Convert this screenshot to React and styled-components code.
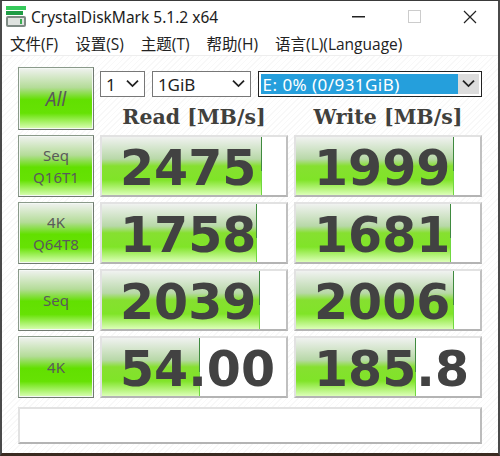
import React from 'react';
import styled, { createGlobalStyle } from 'styled-components';

const Global = createGlobalStyle`
html, body { margin: 0; padding: 0; background: #fff; }
* { box-sizing: border-box; }
`;

const Window = styled.div`
width: 500px;
height: 456px;
border-style: solid;
border-width: 1px 2px 3px 2px;
border-color: #3a3a3a #4a4a4a #3a2a20 #4a4a4a;
background: #fff;
display: flex;
flex-direction: column;
font-family: "Open Sans", "Noto Sans CJK SC", sans-serif;
color: #222;
overflow: hidden;
`;

const TitleBar = styled.div`
height: 31px;
display: flex;
align-items: center;
padding-left: 3px;
`;

const TitleText = styled.span`
margin-left: 4px;
flex: 1;
color: #1c1c1c;
font: 15.5px "Noto Sans", sans-serif;
`;

const WinButton = styled.div`
width: 56px;
height: 31px;
display: flex;
align-items: center;
justify-content: center;
`;

const MenuBar = styled.div`
height: 24px;
display: flex;
gap: 17px;
padding-left: 8px;
align-items: center;
font-size: 15.5px;
color: #222;
border-bottom: 1px solid #eee;
`;

const Client = styled.div`
flex: 1;
padding: 11px 14px 0 16px;
background: repeating-linear-gradient(135deg, #fff 0 3px, #f8f8f8 3px 4px);
display: grid;
grid-template-columns: 76px 188px 188px;
grid-template-rows: 63px repeat(4, 62px) 36px;
column-gap: 6px;
row-gap: 5px;
`;

const Panel = styled.div`
grid-column: 2 / 4;
display: flex;
flex-direction: column;
`;

const Selects = styled.div`
display: flex;
gap: 7px;
padding-top: 4px;
height: 30px;
`;

const Combo = styled.div`
width: ${p => p.$w}px;
height: 26px;
border: 1px solid ${p => (p.$active ? '#222' : '#777')};
background: #fff;
display: flex;
align-items: stretch;
font: 17px "Noto Sans", sans-serif;
padding: ${p => (p.$active ? '2px' : '0')};
color: ${p => (p.$active ? '#fff' : '#222')};
`;

const ComboValue = styled.div`
flex: 1;
display: flex;
align-items: center;
padding-left: ${p => (p.$active ? '2px' : '5px')};
letter-spacing: ${p => (p.$active ? '.45px' : '0')};
background: ${p => (p.$active ? '#259fdc' : 'transparent')};
`;

const ComboArrow = styled.div`
width: ${p => (p.$active ? '21px' : '23px')};
display: flex;
align-items: center;
justify-content: center;
background: ${p => (p.$active ? '#dcdcdc' : 'transparent')};
`;

const Headers = styled.div`
display: grid;
grid-template-columns: 188px 188px;
column-gap: 6px;
flex: 1;
`;

const Header = styled.div`
text-align: center;
font: bold 20.5px "DejaVu Serif", serif;
line-height: 40px;
color: #40403c;
`;

const TestButton = styled.div`
border: 1px solid #8a9a8a;
border-right-color: #707a70;
border-bottom-color: #707a70;
box-shadow: inset 0 0 0 1px #f4f8f4;
background: linear-gradient(#f0f2f0 0%, #b4dc98 32%, #62e000 52%, #66e204 74%, #dcffb8 100%);
display: flex;
flex-direction: column;
align-items: center;
justify-content: center;
color: #5a5a5a;
font-family: "Noto Sans", sans-serif;
font-size: ${p => (p.$big ? '19px' : '15px')};
font-style: ${p => (p.$big ? 'italic' : 'normal')};
line-height: 22px;
`;

const Meter = styled.div`
position: relative;
border: 2px solid #e2e2e2;
border-right-color: #c0c0c0;
border-bottom-color: #b4b4b4;
background: #fff;
`;

const Fill = styled.div`
position: absolute;
left: 0;
top: 0;
bottom: 0;
background: linear-gradient(#f0f2f0 0%, #b8d8a8 38%, #86e030 50%, #80e428 74%, #dcffb8 100%);
border-right: 1px solid #70d840;
&::after {
  content: '';
  position: absolute;
  right: -1px;
  top: 0;
  height: 58%;
  width: 1px;
  background: #3f8a3f;
}
`;

const Value = styled.div`
position: relative;
height: 100%;
padding-left: 18px;
font: bold 49px/63px "DejaVu Sans", sans-serif;
color: #424242;
`;

const Message = styled.div`
grid-column: 1 / 4;
margin-top: 4px;
height: 37px;
border: 2px solid #e2e2e2;
border-right-color: #bcbcbc;
border-bottom-color: #b4b4b4;
background: #fff;
`;

const Chevron = ({ size = 13 }) => (
  <svg width={size} height={size * 0.7} viewBox="0 0 13 9" fill="none" stroke="#222" strokeWidth="1.8">
    <path d="M1 1.5 L6.5 7 L12 1.5" />
  </svg>
);

const DiskIcon = () => (
  <svg width="22" height="22" viewBox="0 0 22 22">
    <rect x="1" y="0" width="20" height="4" fill="#35c95a" />
    <rect x="1" y="5" width="17" height="4" fill="#1f9c45" />
    <rect x="1" y="10" width="20" height="11" rx="2" fill="#7e8a84" />
    <rect x="3" y="12" width="16" height="7" fill="#dfe3e0" />
    <rect x="15" y="13" width="2" height="5" fill="#3cae54" />
  </svg>
);

const rows = [
  { label: ['Seq', 'Q16T1'], read: '2475', readPct: 87, write: '1999', writePct: 86 },
  { label: ['4K', 'Q64T8'], read: '1758', readPct: 84, write: '1681', writePct: 84 },
  { label: ['Seq'], read: '2039', readPct: 86, write: '2006', writePct: 86 },
  { label: ['4K'], read: '54.00', readPct: 53.5, write: '185.8', writePct: 65 },
];

const menus = ['文件(F)', '设置(S)', '主题(T)', '帮助(H)', '语言(L)(Language)'];

const Result = ({ value, pct }) => (
  <Meter>
    <Fill style={{ width: `${pct}%` }} />
    <Value>{value}</Value>
  </Meter>
);

export default function App() {
  return (
    <Window>
      <Global />
      <TitleBar>
        <DiskIcon />
        <TitleText>CrystalDiskMark 5.1.2 x64</TitleText>
        <WinButton>
          <svg width="13" height="2"><rect width="13" height="1.5" fill="#222" /></svg>
        </WinButton>
        <WinButton>
          <svg width="13" height="13"><rect x=".5" y=".5" width="12" height="12" fill="none" stroke="#ccc" /></svg>
        </WinButton>
        <WinButton>
          <svg width="14" height="14" stroke="#222" strokeWidth="1.2"><path d="M1 1 L13 13 M13 1 L1 13" /></svg>
        </WinButton>
      </TitleBar>
      <MenuBar>
        {menus.map(m => <span key={m}>{m}</span>)}
      </MenuBar>
      <Client>
        <TestButton $big>All</TestButton>
        <Panel>
          <Selects>
            <Combo $w={45}>
              <ComboValue>1</ComboValue>
              <ComboArrow><Chevron /></ComboArrow>
            </Combo>
            <Combo $w={99}>
              <ComboValue>1GiB</ComboValue>
              <ComboArrow><Chevron /></ComboArrow>
            </Combo>
            <Combo $w={225} $active>
              <ComboValue $active>E: 0% (0/931GiB)</ComboValue>
              <ComboArrow $active><Chevron /></ComboArrow>
            </Combo>
          </Selects>
          <Headers>
            <Header>Read [MB/s]</Header>
            <Header>Write [MB/s]</Header>
          </Headers>
        </Panel>
        {rows.map(r => (
          <React.Fragment key={r.read}>
            <TestButton>
              {r.label.map(l => <span key={l}>{l}</span>)}
            </TestButton>
            <Result value={r.read} pct={r.readPct} />
            <Result value={r.write} pct={r.writePct} />
          </React.Fragment>
        ))}
        <Message />
      </Client>
    </Window>
  );
}
